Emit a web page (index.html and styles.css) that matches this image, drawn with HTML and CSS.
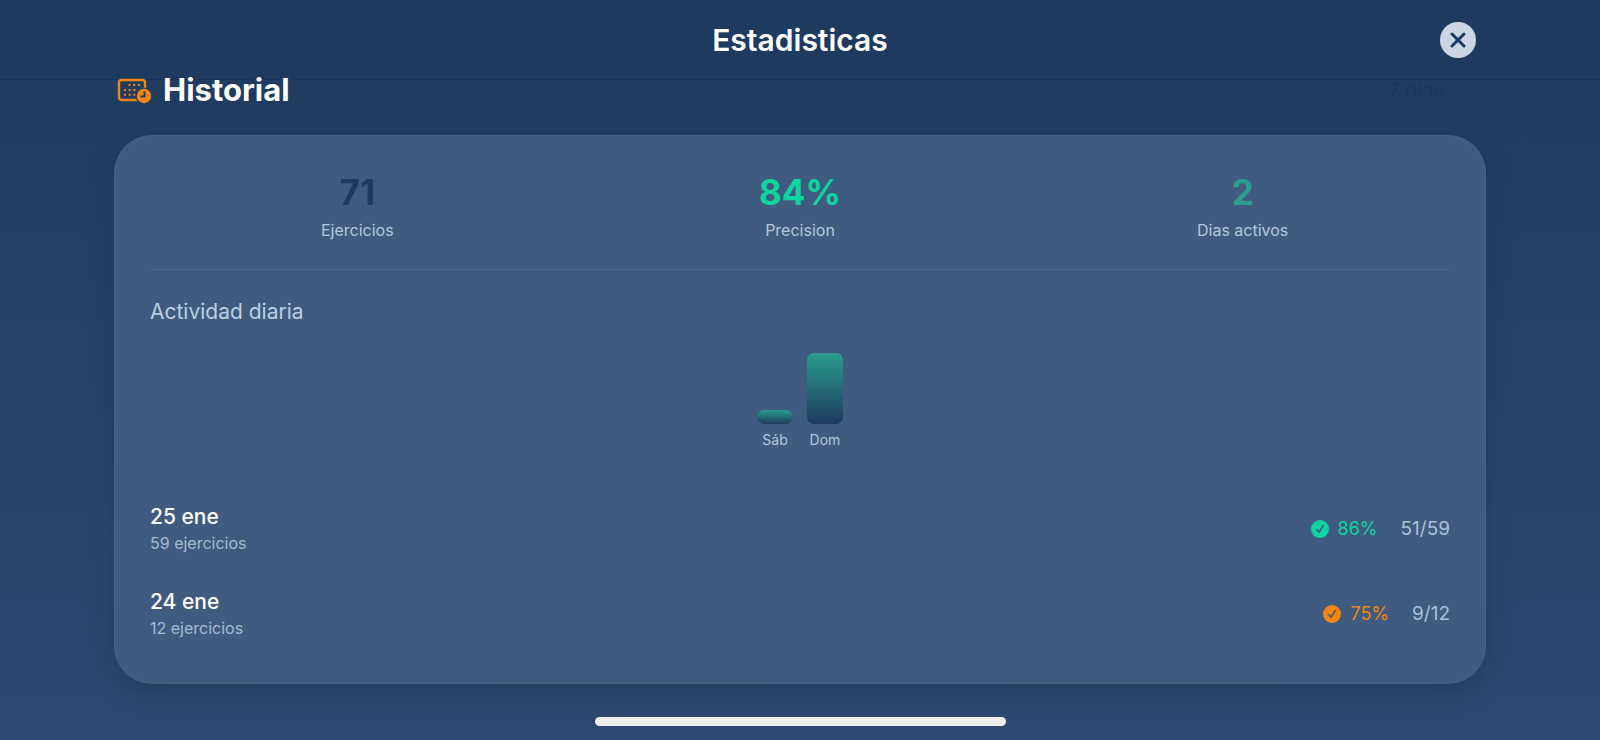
FILE: index.html
```html
<!DOCTYPE html>
<html lang="es">
<head>
    <meta charset="UTF-8">
    <meta name="viewport" content="width=device-width, initial-scale=1.0">
    <title>Estadisticas</title>
    <link rel="stylesheet" href="styles.css">
</head>
<body>
    <header class="topbar">
        <h1>Estadisticas</h1>
        <button type="button" class="close" aria-label="Cerrar">
            <svg width="16" height="16" viewBox="0 0 16 16"><path d="M2 2L14 14M14 2L2 14"/></svg>
        </button>
    </header>

    <main>
        <div class="section-title">
            <svg class="calendar" width="36" height="28" viewBox="0 0 36 28">
                <rect class="frame" x="2" y="4" width="26" height="20" rx="2.500"/>
                <path class="days" d="M11.500 9H23.500M7 14H18.500M7 18.700H18.500"/>
                <circle class="gap" cx="27" cy="20" r="8.600"/>
                <circle class="clock" cx="27" cy="20" r="7.200"/>
                <path class="hands" d="M27.500 15.500V20.500H23.500"/>
            </svg>
            <h2>Historial</h2>
            <span class="period">7 dias</span>
        </div>

        <section class="card">
            <div class="stats">
                <div class="stat">
                    <strong class="navy">71</strong>
                    <span>Ejercicios</span>
                </div>
                <div class="stat">
                    <strong class="green">84%</strong>
                    <span>Precision</span>
                </div>
                <div class="stat">
                    <strong class="teal">2</strong>
                    <span>Dias activos</span>
                </div>
            </div>

            <h3>Actividad diaria</h3>
            <div class="chart">
                <div class="day">
                    <div class="bar" style="height: 14px"></div>
                    <span>Sáb</span>
                </div>
                <div class="day">
                    <div class="bar" style="height: 71px"></div>
                    <span>Dom</span>
                </div>
            </div>

            <ul class="history">
                <li>
                    <div class="date">
                        <b>25 ene</b>
                        <small>59 ejercicios</small>
                    </div>
                    <div class="score green">
                        <svg width="18" height="18" viewBox="0 0 18 18"><circle cx="9" cy="9" r="9"/><path d="M5.800 9.500L8 12.300L12.300 5.500"/></svg>
                        <span>86%</span>
                    </div>
                    <span class="total">51/59</span>
                </li>
                <li>
                    <div class="date">
                        <b>24 ene</b>
                        <small>12 ejercicios</small>
                    </div>
                    <div class="score orange">
                        <svg width="18" height="18" viewBox="0 0 18 18"><circle cx="9" cy="9" r="9"/><path d="M5.800 9.500L8 12.300L12.300 5.500"/></svg>
                        <span>75%</span>
                    </div>
                    <span class="total">9/12</span>
                </li>
            </ul>
        </section>
    </main>

    <div class="home-indicator"></div>
</body>
</html>
```
FILE: styles.css
```css
* {
    box-sizing: border-box;
}
body {
    font-family: Inter, "Liberation Sans", sans-serif;
    margin: 0;
    min-height: 100vh;
    color: #fff;
    background: linear-gradient(#1e3a5f, #2e4a72);
}
h1, h2, h3, ul {
    margin: 0;
    padding: 0;
}

/* top bar */
.topbar {
    display: grid;
    grid-template-columns: 1fr auto 1fr;
    align-items: center;
    height: 80px;
    padding: 0 124px;
    background: #1e3a5f;
    border-bottom: 1px solid #19335a;
}
h1 {
    grid-column: 2;
    font-size: 30px;
    font-weight: 600;
    line-height: 36px;
}
.close {
    justify-self: end;
    display: flex;
    align-items: center;
    justify-content: center;
    width: 36px;
    height: 36px;
    padding: 0;
    border: 0;
    border-radius: 50%;
    background: #ccd6e3;
    cursor: pointer;
}
.close path {
    fill: none;
    stroke: #1e3a5f;
    stroke-width: 3;
    stroke-linecap: round;
}

main {
    padding: 0 114px;
}
.section-title {
    display: flex;
    align-items: center;
    gap: 10px;
    height: 20px;
    margin-bottom: 35px;
    padding: 0 42px 0 3px;
}
h2 {
    font-size: 31px;
    font-weight: 700;
    line-height: 20px;
}
.period {
    margin-left: auto;
    font-size: 20px;
    color: #1c375b;
}
.calendar {
    fill: none;
    stroke: #f5860b;
}
.frame {
    stroke-width: 2.400;
}
.days {
    stroke-width: 2;
    stroke-dasharray: 2 2.700;
}
.gap {
    fill: #1f3c62;
    stroke: none;
}
.clock {
    fill: #f5860b;
    stroke: none;
}
.hands {
    stroke: #1e3a5f;
    stroke-width: 2;
}

/* card */
.card {
    padding: 36px 36px 28px;
    border-radius: 38px;
    background: #3f5b7f;
    box-shadow: inset 0 0 0 1px rgba(255, 255, 255, 0.04), 0 8px 24px rgba(20, 50, 70, 0.45);
}
.stats {
    display: grid;
    grid-template-columns: repeat(3, 1fr);
    gap: 28px;
    padding-bottom: 29px;
    border-bottom: 1px solid #4d6b8c;
}
.stat {
    display: flex;
    flex-direction: column;
    align-items: center;
    gap: 7px;
}
.stat strong {
    font-size: 35px;
    font-weight: 700;
    line-height: 42px;
}
.stat span {
    font-size: 16px;
    line-height: 20px;
    color: #b3c8dd;
}
.navy {
    color: #1e3a5f;
}
.green {
    color: #0cd6a0;
}
.teal {
    color: #2a9d8f;
}
.orange {
    color: #f5860b;
}

h3 {
    margin-top: 28px;
    font-size: 21px;
    font-weight: 400;
    line-height: 28px;
    color: #b9cfe3;
}
.chart {
    display: flex;
    justify-content: center;
    align-items: flex-end;
    gap: 14px;
    height: 122px;
    margin-bottom: 38px;
}
.day {
    display: flex;
    flex-direction: column;
    align-items: center;
    gap: 8px;
    width: 36px;
}
.bar {
    width: 100%;
    border-radius: 7px;
    background: linear-gradient(#2a9d8f, #1e3a5f);
}
.day span {
    font-size: 14px;
    line-height: 16px;
    color: #b3c8dd;
}

/* history */
.history {
    list-style: none;
}
.history li {
    display: flex;
    align-items: center;
    padding: 18px 0;
}
.date {
    display: flex;
    flex-direction: column;
    gap: 3px;
    margin-right: auto;
}
.date b {
    font-size: 21px;
    font-weight: 500;
    line-height: 26px;
}
.date small {
    font-size: 16px;
    line-height: 20px;
    color: #a3bbd3;
}
.score {
    display: flex;
    align-items: center;
    gap: 9px;
    margin-right: 23px;
    font-size: 18px;
}
.score circle {
    fill: currentColor;
}
.score path {
    fill: none;
    stroke: #3f5b7f;
    stroke-width: 1.600;
    stroke-linecap: round;
    stroke-linejoin: round;
}
.total {
    font-size: 19px;
    color: #a9c0d8;
}

.home-indicator {
    position: fixed;
    left: 50%;
    bottom: 14px;
    width: 411px;
    height: 9px;
    margin-left: -205px;
    border-radius: 5px;
    background: #efefef;
}
```
